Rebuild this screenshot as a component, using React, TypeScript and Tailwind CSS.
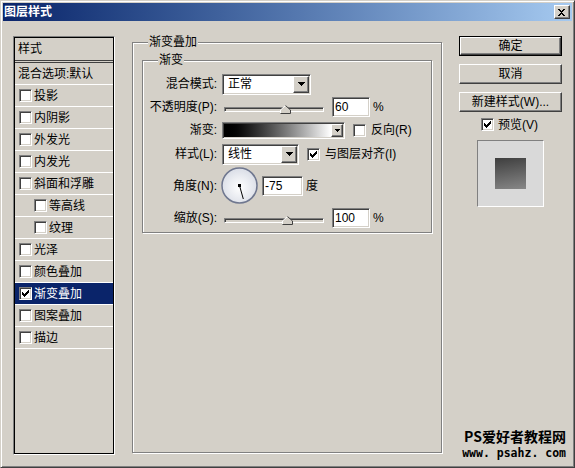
import React from "react";

const FONT = "font-['Liberation_Sans','Noto_Sans_CJK_SC',sans-serif]";
const RAISED =
  "border border-t-white border-l-white border-r-[#404040] border-b-[#404040] shadow-[inset_-1px_-1px_0_#808080] bg-[#d4d0c8]";
const SUNKEN =
  "border border-t-[#808080] border-l-[#808080] border-r-white border-b-white shadow-[inset_1px_1px_0_#404040,inset_-1px_-1px_0_#d4d0c8]";

function Arrow({ small }: { small?: boolean }) {
  const rows = small ? [5, 3, 1] : [7, 5, 3, 1];
  const w = rows[0];
  return (
    <svg width={w} height={rows.length} shapeRendering="crispEdges">
      {rows.map((r, i) => (
        <rect key={i} x={(w - r) / 2} y={i} width={r} height={1} fill="#000" />
      ))}
    </svg>
  );
}

function CheckBox({ checked }: { checked?: boolean }) {
  const marks: [number, number, number][] = [
    [6, 0, 1],
    [5, 1, 2],
    [0, 2, 1],
    [4, 2, 3],
    [0, 3, 2],
    [3, 3, 3],
    [0, 4, 5],
    [1, 5, 3],
    [2, 6, 1],
  ];
  return (
    <span className={`relative inline-block w-[13px] h-[13px] shrink-0 bg-white ${SUNKEN}`}>
      {checked && (
        <svg className="absolute left-[2px] top-[2px]" width="7" height="7" shapeRendering="crispEdges">
          {marks.map(([x, y, w], i) => (
            <rect key={i} x={x} y={y} width={w} height={1} fill="#000" />
          ))}
        </svg>
      )}
    </span>
  );
}

function Slider({ pos }: { pos: number }) {
  return (
    <div className="relative ml-[2px] mt-[4px] w-[100px] h-[9px]">
      <div className={`absolute left-0 right-0 top-[2px] h-[5px] bg-[#d4d0c8] ${SUNKEN}`} />
      <svg className="absolute top-0" style={{ left: pos - 5 }} width="11" height="9">
        <polygon points="0.5,8.5 0.5,5 5.5,0.5 10.5,5 10.5,8.5" fill="#d4d0c8" />
        <polyline points="0.5,8 0.5,5 5.5,0.5" fill="none" stroke="#fff" strokeWidth="1" />
        <polyline points="5.5,0.5 10.5,5 10.5,8.5 0.5,8.5" fill="none" stroke="#404040" strokeWidth="1" />
      </svg>
    </div>
  );
}

function Input({ value, w }: { value: string; w: string }) {
  return (
    <div className={`flex items-center h-[20px] bg-white pl-[2px] text-[12px] ${SUNKEN} ${w}`}>{value}</div>
  );
}

function Row({ label, children, h = "h-[22px]", mt = "" }: { label: string; children: React.ReactNode; h?: string; mt?: string }) {
  return (
    <div className={`flex items-center ${h} ${mt}`}>
      <div className="w-[74px] text-right text-[12px] leading-[14px] whitespace-nowrap">{label}</div>
      <div className="ml-[5px] flex items-center text-[12px]">{children}</div>
    </div>
  );
}

function Button({ label, def }: { label: string; def?: boolean }) {
  const inner = (
    <div className={`flex items-center justify-center h-full w-full text-[12px] ${RAISED}`}>{label}</div>
  );
  if (def) {
    return <div className="h-[20px] w-[103px] border border-black">{inner}</div>;
  }
  return <div className="h-[20px] w-[103px]">{inner}</div>;
}

type Item = { label: string; check?: boolean; indent?: boolean; checked?: boolean; selected?: boolean };

const items: Item[] = [
  { label: "混合选项:默认" },
  { label: "投影", check: true },
  { label: "内阴影", check: true },
  { label: "外发光", check: true },
  { label: "内发光", check: true },
  { label: "斜面和浮雕", check: true },
  { label: "等高线", check: true, indent: true },
  { label: "纹理", check: true, indent: true },
  { label: "光泽", check: true },
  { label: "颜色叠加", check: true },
  { label: "渐变叠加", check: true, checked: true, selected: true },
  { label: "图案叠加", check: true },
  { label: "描边", check: true },
];

export default function App() {
  return (
    <div
      className={`relative w-[575px] h-[468px] overflow-hidden bg-[#d4d0c8] text-black ${FONT} border border-t-[#d4d0c8] border-l-[#d4d0c8] border-r-[#404040] border-b-[#404040] shadow-[inset_1px_1px_0_#fff,inset_-1px_-1px_0_#808080] p-[2px] flex flex-col`}
    >
      {/* Title bar */}
      <div className="h-[18px] shrink-0 flex items-center justify-between bg-linear-to-r from-[#0a246a] to-[#a6caf0] pl-[1px] pr-[2px]">
        <span className="text-white font-bold text-[12px] leading-[14px]">图层样式</span>
        <div className={`w-[16px] h-[14px] flex items-center justify-center ${RAISED}`}>
          <svg width="8" height="7" shapeRendering="crispEdges">
            {[
              [0, 0], [1, 0], [6, 0], [5, 0],
              [1, 1], [2, 1], [4, 1], [5, 1],
              [2, 2], [3, 2], [4, 2],
              [3, 3],
              [2, 4], [3, 4], [4, 4],
              [1, 5], [2, 5], [4, 5], [5, 5],
              [0, 6], [1, 6], [5, 6], [6, 6],
            ].map(([x, y], i) => (
              <rect key={i} x={x} y={y} width={1} height={1} fill="#000" />
            ))}
          </svg>
        </div>
      </div>

      {/* Content */}
      <div className="flex pl-[10px] pt-[15px]">
        {/* Left list */}
        <div className="w-[102px] h-[419px] shrink-0 border border-t-[#808080] border-l-[#808080] border-r-white border-b-white shadow-[inset_0_0_0_1px_#000] p-[1px] flex flex-col">
          <div className="h-[25px] shrink-0 border-b-[3px] border-double border-[#404040] flex items-center pl-[3px] text-[12px]">
            样式
          </div>
          {items.map((it, i) => (
            <div
              key={i}
              className={`h-[22px] shrink-0 border-b border-white flex items-center text-[12px] ${
                it.selected ? "bg-[#0a246a] text-white" : ""
              } ${it.check ? (it.indent ? "pl-[19px]" : "pl-[4px]") : "pl-[3px]"}`}
            >
              {it.check && <CheckBox checked={it.checked} />}
              <span className={it.check ? "ml-[2px]" : ""}>{it.label}</span>
            </div>
          ))}
        </div>

        {/* Main group */}
        <div className="relative ml-[17px] mt-[6px] w-[310px] h-[411px] shrink-0 border border-[#808080] shadow-[inset_1px_1px_0_#fff,1px_1px_0_#fff] pt-[17px] pl-[9px]">
          <span className="absolute left-[15px] top-[-8px] px-[1px] bg-[#d4d0c8] text-[12px] leading-[14px]">渐变叠加</span>

          <div className="relative w-[290px] border border-[#808080] shadow-[inset_1px_1px_0_#fff,1px_1px_0_#fff] pt-[12px] pb-[3px]">
            <span className="absolute left-[15px] top-[-8px] px-[1px] bg-[#d4d0c8] text-[12px] leading-[14px]">渐变</span>

            <Row label="混合模式:">
              <div className={`flex items-center h-[21px] w-[89px] bg-white p-[1px] ${SUNKEN}`}>
                <span className="flex-1 pl-[4px] text-[12px]">正常</span>
                <div className={`w-[16px] h-[17px] flex items-center justify-center ${RAISED}`}>
                  <Arrow />
                </div>
              </div>
            </Row>

            <Row label="不透明度(P):" mt="mt-[1px]">
              <Slider pos={61} />
              <div className="ml-[8px]">
                <Input value="60" w="w-[38px]" />
              </div>
              <span className="ml-[3px]">%</span>
            </Row>

            <Row label="渐变:" mt="mt-[1px]">
              <div className={`flex h-[17px] w-[123px] bg-white p-[1px] ${SUNKEN}`}>
                <div className="flex-1 bg-linear-to-r from-black to-white" />
                <div className={`w-[12px] h-full flex items-center justify-center ${RAISED}`}>
                  <Arrow small />
                </div>
              </div>
              <div className="ml-[8px] flex items-center">
                <CheckBox />
              </div>
              <span className="ml-[5px]">反向(R)</span>
            </Row>

            <Row label="样式(L):" mt="mt-[2px]">
              <div className={`flex items-center h-[21px] w-[77px] bg-white p-[1px] ${SUNKEN}`}>
                <span className="flex-1 pl-[4px] text-[12px]">线性</span>
                <div className={`w-[16px] h-[17px] flex items-center justify-center ${RAISED}`}>
                  <Arrow />
                </div>
              </div>
              <div className="ml-[8px] flex items-center">
                <CheckBox checked />
              </div>
              <span className="ml-[5px]">与图层对齐(I)</span>
            </Row>

            <Row label="角度(N):" h="h-[38px]" mt="mt-[2px]">
              <svg className="ml-[-1px]" width="38" height="38">
                <defs>
                  <radialGradient id="dialg" cx="50%" cy="55%" r="60%">
                    <stop offset="0" stopColor="#ffffff" />
                    <stop offset="1" stopColor="#d6dae4" />
                  </radialGradient>
                </defs>
                <circle cx="18.5" cy="18.5" r="17.5" fill="url(#dialg)" stroke="#6f778f" strokeWidth="1.5" />
                <line x1="18.5" y1="18.5" x2="22.3" y2="32" stroke="#000" strokeWidth="1" />
                <rect x="17" y="17" width="3" height="3" fill="#000" />
              </svg>
              <div className="ml-[3px]">
                <Input value="-75" w="w-[41px]" />
              </div>
              <span className="ml-[3px]">度</span>
            </Row>

            <Row label="缩放(S):" mt="mt-[2px]">
              <Slider pos={63} />
              <div className="ml-[8px]">
                <Input value="100" w="w-[38px]" />
              </div>
              <span className="ml-[3px]">%</span>
            </Row>
          </div>
        </div>

        {/* Right column */}
        <div className="ml-[17px] flex flex-col w-[103px]">
          <Button label="确定" def />
          <div className="mt-[8px]">
            <Button label="取消" />
          </div>
          <div className="mt-[8px]">
            <Button label="新建样式(W)..." />
          </div>
          <div className="mt-[6px] ml-[22px] flex items-center h-[13px]">
            <CheckBox checked />
            <span className="ml-[4px] text-[12px]">预览(V)</span>
          </div>
          <div className="mt-[9px] ml-[18px] w-[67px] h-[67px] border border-t-[#808080] border-l-[#808080] border-r-white border-b-white bg-[#d9d9d9] flex items-center justify-center">
            <div className="w-[31px] h-[31px] bg-[linear-gradient(170deg,#3e3e3e,#878787)]" />
          </div>
        </div>
      </div>

      {/* Watermark */}
      <div className="absolute right-[8px] bottom-[5px] flex flex-col items-end font-bold leading-[17px]">
        <span className="text-[14px] font-['Noto_Sans_CJK_SC',sans-serif]">PS爱好者教程网</span>
        <span className="text-[11.5px] font-['DejaVu_Sans_Mono',monospace]">www. psahz. com</span>
      </div>
    </div>
  );
}
